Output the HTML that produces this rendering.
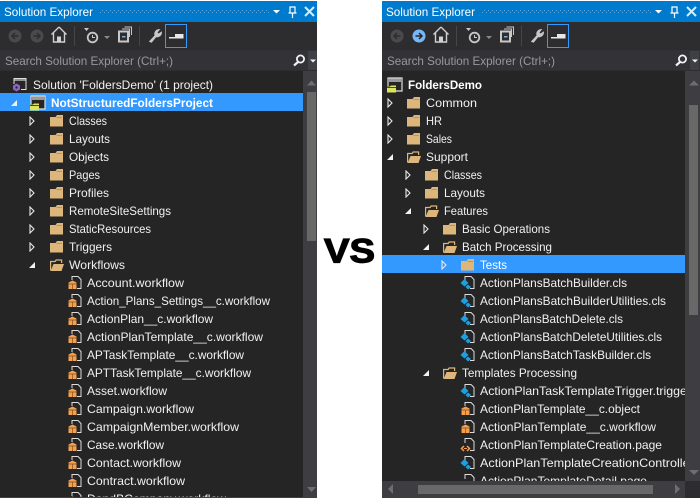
<!DOCTYPE html>
<html><head><meta charset="utf-8"><style>
html,body{margin:0;padding:0;background:#fff;width:700px;height:500px;overflow:hidden}
svg{display:block;font-family:"Liberation Sans",sans-serif;font-size:12px}
.t{fill:#f1f1f1}
.b{font-weight:bold;fill:#fff}
</style></head><body>
<svg width="700" height="500" viewBox="0 0 700 500" xmlns="http://www.w3.org/2000/svg">
<defs>
<pattern id="dots" width="4" height="4" patternUnits="userSpaceOnUse"><rect x="0" y="0" width="1" height="1" fill="#5aa9de"/><rect x="2" y="2" width="1" height="1" fill="#5aa9de"/></pattern>
<clipPath id="cl"><rect x="0" y="71" width="303" height="426"/></clipPath>
<clipPath id="cr"><rect x="382" y="71" width="303" height="410"/></clipPath>
<symbol id="fc" viewBox="0 0 14 14" width="14" height="14" overflow="visible"><path d="M0 3h5.500l1.500-2h6v11.500H0z" fill="#dcb67a"/><path d="M6.500 3.500h5.500" stroke="#b8975f" stroke-width="1"/></symbol>
<symbol id="fo" viewBox="0 0 14 14" width="14" height="14" overflow="visible"><path d="M0.600 12.500V3.500h4.500l1-1.500h5.500v3" fill="none" stroke="#dcb67a" stroke-width="1.200"/><path d="M3.500 6h10.500l-2.500 7H0.600z" fill="#dcb67a"/></symbol>
<symbol id="ah" viewBox="0 0 6 10" width="6" height="10"><path d="M1 1l4 4-4 4z" fill="none" stroke="#e8e8e8" stroke-width="1.100"/></symbol>
<symbol id="ae" viewBox="0 0 6 6" width="6" height="6"><path d="M0 6L6 0v6z" fill="#f1f1f1"/></symbol>
<symbol id="wf" viewBox="0 0 14 14" width="14" height="14" overflow="visible"><path d="M4 4V0.500h6l3 3v9H9" fill="none" stroke="#dcdcdc" stroke-width="1"/><path d="M0.500 6.500L4.500 4.500l4 2V13h-8z" fill="#f6a04d"/><path d="M0.500 8h8M4.500 8v5" stroke="#7a5228" stroke-width=".7"/></symbol>
<symbol id="cls" viewBox="0 0 14 14" width="14" height="14" overflow="visible"><path d="M4 4V0.500h6l3 3v9H9" fill="none" stroke="#dcdcdc" stroke-width="1"/><path d="M3.500 3L7.500 7 3.500 10.500 -0.500 7z" fill="#1ba1e2"/><path d="M7 8.500l3 2.500-3 2.500-2.500-2.500z" fill="#1ba1e2"/></symbol>
<symbol id="pg" viewBox="0 0 14 14" width="14" height="14" overflow="visible"><path d="M4 5V0.500h6l3 3v9H9" fill="none" stroke="#dcdcdc" stroke-width="1"/><path d="M3 8L0.500 10.500 3 13M6 8l2.500 2.500L6 13" fill="none" stroke="#f6a04d" stroke-width="1.500"/><path d="M3 10.500h3" stroke="#f6a04d"/></symbol>
<symbol id="proj" viewBox="0 0 16 16" width="16" height="16" overflow="visible"><path d="M1 9V1h14v13H9" fill="#252526" stroke="#e0e0e0" stroke-width="1.200"/><path d="M2 1.500h12v3.500H2z" fill="#9a9a9a"/><path d="M0 9.500h3l1-1h5v7H0z" fill="#dce35d"/><path d="M0 10.500h9" stroke="#252526" stroke-width=".8"/></symbol>
<symbol id="toolbar" viewBox="0 0 318 72" width="318" height="72" overflow="visible">
  <rect x="0" y="1" width="318" height="21" fill="#007acc"/>
  <rect x="0" y="22" width="318" height="28" fill="#2d2d30"/>
  <rect x="0" y="50" width="318" height="21" fill="#333337"/>
  <rect x="0" y="70" width="318" height="1" fill="#2d2d30"/>
  <rect x="100" y="9" width="169" height="5" fill="url(#dots)"/>
  <text x="4" y="16" fill="#fff" textLength="89" lengthAdjust="spacingAndGlyphs">Solution Explorer</text>
  <path d="M273 10h7l-3.500 3.500z" fill="#fff"/>
  <path d="M290 7h5v6h-5zM288.500 13h8M292.500 13v5" fill="none" stroke="#fff" stroke-width="1.200"/>
  <path d="M305 7l9 9M314 7l-9 9" stroke="#d8ecf8" stroke-width="2"/>
  <path d="M59 27l-7.500 7.500M59 27l7.500 7.500M53.500 33v9h11v-9" fill="none" stroke="#d0d0d0" stroke-width="1.400"/>
  <rect x="57" y="36.500" width="4" height="6" fill="#d0d0d0"/>
  <rect x="74" y="26" width="1" height="20" fill="#46464a"/>
  <path d="M84 28h5l-2.500 3z" fill="#c8c8c8"/>
  <circle cx="92.500" cy="37.500" r="4.800" fill="none" stroke="#c8c8c8" stroke-width="1.800"/>
  <path d="M92.500 35v2.500h2.500" stroke="#c8c8c8" fill="none"/>
  <path d="M104 36h6l-3 3z" fill="#8a8a8a"/>
  <path d="M122 29h7.500v8M124.500 27h7v8" fill="none" stroke="#c8c8c8"/>
  <rect x="119" y="31.500" width="9" height="10" fill="none" stroke="#c8c8c8" stroke-width="2"/>
  <rect x="122" y="36" width="3.500" height="1.500" fill="#7db0d8"/>
  <rect x="139" y="26" width="1" height="20" fill="#46464a"/>
  <path d="M149.500 41.500l5.500-6c-1-2.500.5-6 4.500-6l-2.500 3 1.500 1.500 3-2c.3 3.500-3 5.500-5.500 4.800l-4.500 5.500z" fill="#c8c8c8" stroke="#c8c8c8" stroke-width=".8"/>
  <rect x="165.500" y="24.500" width="21" height="23" fill="none" stroke="#3399ff"/>
  <rect x="169" y="37" width="14.500" height="1.500" fill="#e8e8e8"/>
  <rect x="175" y="34" width="8.500" height="4.500" fill="#e8e8e8"/>
  <text x="5" y="65" fill="#999" textLength="168" lengthAdjust="spacingAndGlyphs">Search Solution Explorer (Ctrl+;)</text>
  <rect x="308" y="51" width="9" height="19" fill="#3f3f46"/>
  <circle cx="300.500" cy="59" r="3.600" fill="none" stroke="#f1f1f1" stroke-width="1.800"/>
  <path d="M298 62l-4 3.500" stroke="#f1f1f1" stroke-width="2.200"/>
  <path d="M310 59.500h6l-3 3z" fill="#f1f1f1"/>
</symbol>
</defs>

<rect width="700" height="500" fill="#fff"/>

<!-- LEFT PANEL -->
<rect x="0" y="1" width="317" height="497" fill="#252526"/>
<use href="#toolbar"/>
<rect x="317" y="0" width="1" height="72" fill="#fff"/>
<circle cx="15" cy="36" r="6.500" fill="#4a4a4c"/><path d="M18.500 36h-6M15 33l-3 3 3 3" fill="none" stroke="#2d2d30" stroke-width="1.500"/>
<circle cx="37" cy="36" r="6.500" fill="#4a4a4c"/><path d="M33.500 36h6M37 33l3 3-3 3" fill="none" stroke="#2d2d30" stroke-width="1.500"/>
<rect x="0" y="93" width="303" height="18" fill="#3399ff"/>
<rect x="303" y="71" width="14" height="427" fill="#3e3e42"/>
<rect x="307" y="92" width="9" height="149" fill="#686868"/>
<path d="M307 85.500l4.500-5 4.500 5z" fill="#6e6e72"/>
<path d="M307 487h9l-4.500 5z" fill="#6e6e72"/>
<rect x="0" y="497" width="317" height="1" fill="#3f3f46"/>
<g clip-path="url(#cl)">
<rect x="14" y="78" width="12" height="3" fill="#909090"/>
<path d="M14 84V78.500h12v11h-5" fill="none" stroke="#e0e0e0"/>
<path d="M16.500 83.500l3.500 2v4l-3.500 2-3.500-2v-4z" fill="#9060c8"/>
<circle cx="16.500" cy="87.500" r="1.100" fill="#252526"/>
<text class="t" x="33" y="89" textLength="180" lengthAdjust="spacingAndGlyphs">Solution 'FoldersDemo' (1 project)</text>
<use href="#ae" x="11" y="100"/>
<use href="#proj" x="30" y="95"/>
<text class="b" x="51" y="107" textLength="162" lengthAdjust="spacingAndGlyphs">NotStructuredFoldersProject</text>

<use href="#ah" x="29" y="116"/><use href="#fc" x="50" y="114"/><text class="t" x="69" y="125" textLength="38" lengthAdjust="spacingAndGlyphs">Classes</text>
<use href="#ah" x="29" y="134"/><use href="#fc" x="50" y="132"/><text class="t" x="69" y="143" textLength="41" lengthAdjust="spacingAndGlyphs">Layouts</text>
<use href="#ah" x="29" y="152"/><use href="#fc" x="50" y="150"/><text class="t" x="69" y="161" textLength="40" lengthAdjust="spacingAndGlyphs">Objects</text>
<use href="#ah" x="29" y="170"/><use href="#fc" x="50" y="168"/><text class="t" x="69" y="179" textLength="31" lengthAdjust="spacingAndGlyphs">Pages</text>
<use href="#ah" x="29" y="188"/><use href="#fc" x="50" y="186"/><text class="t" x="69" y="197" textLength="40" lengthAdjust="spacingAndGlyphs">Profiles</text>
<use href="#ah" x="29" y="206"/><use href="#fc" x="50" y="204"/><text class="t" x="69" y="215" textLength="102" lengthAdjust="spacingAndGlyphs">RemoteSiteSettings</text>
<use href="#ah" x="29" y="224"/><use href="#fc" x="50" y="222"/><text class="t" x="69" y="233" textLength="82" lengthAdjust="spacingAndGlyphs">StaticResources</text>
<use href="#ah" x="29" y="242"/><use href="#fc" x="50" y="240"/><text class="t" x="69" y="251" textLength="43" lengthAdjust="spacingAndGlyphs">Triggers</text>
<use href="#ae" x="29" y="262"/><use href="#fo" x="50" y="258"/><text class="t" x="69" y="269" textLength="56" lengthAdjust="spacingAndGlyphs">Workflows</text>

<use href="#wf" x="68" y="276"/><text class="t" x="87" y="287" textLength="97" lengthAdjust="spacingAndGlyphs">Account.workflow</text>
<use href="#wf" x="68" y="294"/><text class="t" x="87" y="305" textLength="183" lengthAdjust="spacingAndGlyphs">Action_Plans_Settings__c.workflow</text>
<use href="#wf" x="68" y="312"/><text class="t" x="87" y="323" textLength="126" lengthAdjust="spacingAndGlyphs">ActionPlan__c.workflow</text>
<use href="#wf" x="68" y="330"/><text class="t" x="87" y="341" textLength="176" lengthAdjust="spacingAndGlyphs">ActionPlanTemplate__c.workflow</text>
<use href="#wf" x="68" y="348"/><text class="t" x="87" y="359" textLength="157" lengthAdjust="spacingAndGlyphs">APTaskTemplate__c.workflow</text>
<use href="#wf" x="68" y="366"/><text class="t" x="87" y="377" textLength="164" lengthAdjust="spacingAndGlyphs">APTTaskTemplate__c.workflow</text>
<use href="#wf" x="68" y="384"/><text class="t" x="87" y="395" textLength="80" lengthAdjust="spacingAndGlyphs">Asset.workflow</text>
<use href="#wf" x="68" y="402"/><text class="t" x="87" y="413" textLength="107" lengthAdjust="spacingAndGlyphs">Campaign.workflow</text>
<use href="#wf" x="68" y="420"/><text class="t" x="87" y="431" textLength="152" lengthAdjust="spacingAndGlyphs">CampaignMember.workflow</text>
<use href="#wf" x="68" y="438"/><text class="t" x="87" y="449" textLength="77" lengthAdjust="spacingAndGlyphs">Case.workflow</text>
<use href="#wf" x="68" y="456"/><text class="t" x="87" y="467" textLength="94" lengthAdjust="spacingAndGlyphs">Contact.workflow</text>
<use href="#wf" x="68" y="474"/><text class="t" x="87" y="485" textLength="98" lengthAdjust="spacingAndGlyphs">Contract.workflow</text>
<use href="#wf" x="68" y="492"/><text class="t" x="87" y="503" textLength="139" lengthAdjust="spacingAndGlyphs">DandBCompany.workflow</text>
</g>

<!-- VS -->
<text x="324" y="262.500" font-size="34" font-weight="bold" fill="#000" stroke="#000" stroke-width="1.200" textLength="51" lengthAdjust="spacingAndGlyphs">VS</text>

<!-- RIGHT PANEL -->
<rect x="382" y="1" width="318" height="497" fill="#252526"/>
<use href="#toolbar" x="382"/>
<circle cx="397" cy="36" r="6.500" fill="#4a4a4c"/><path d="M400.500 36h-6M397 33l-3 3 3 3" fill="none" stroke="#2d2d30" stroke-width="1.500"/>
<circle cx="419" cy="36" r="6.500" fill="#75b8f5"/><path d="M415.500 36h6M419 33l3 3-3 3" fill="none" stroke="#252526" stroke-width="1.500"/>
<rect x="382" y="255" width="303" height="18" fill="#3399ff"/>
<rect x="685" y="71" width="15" height="410" fill="#3e3e42"/>
<rect x="689" y="105" width="9" height="210" fill="#686868"/>
<path d="M689 85.500l5-5 5 5z" fill="#6e6e72"/>
<path d="M689 470h10l-5 5z" fill="#6e6e72"/>
<rect x="382" y="481" width="303" height="17" fill="#3e3e42"/>
<rect x="685" y="481" width="15" height="17" fill="#2d2d30"/>
<rect x="418" y="485" width="235" height="9" fill="#686868"/>
<path d="M393 484v10l-5-5z" fill="#6e6e72"/>
<path d="M675 484v10l5-5z" fill="#6e6e72"/>
<g clip-path="url(#cr)">
<use href="#proj" x="387" y="77"/>
<text class="b" x="408" y="89" textLength="74" lengthAdjust="spacingAndGlyphs">FoldersDemo</text>
<use href="#ah" x="387" y="98"/><use href="#fc" x="407" y="96"/><text class="t" x="426" y="107" textLength="51" lengthAdjust="spacingAndGlyphs">Common</text>
<use href="#ah" x="387" y="116"/><use href="#fc" x="407" y="114"/><text class="t" x="426" y="125" textLength="16" lengthAdjust="spacingAndGlyphs">HR</text>
<use href="#ah" x="387" y="134"/><use href="#fc" x="407" y="132"/><text class="t" x="426" y="143" textLength="26" lengthAdjust="spacingAndGlyphs">Sales</text>
<use href="#ae" x="387" y="154"/><use href="#fo" x="407" y="150"/><text class="t" x="426" y="161" textLength="42" lengthAdjust="spacingAndGlyphs">Support</text>
<use href="#ah" x="405" y="170"/><use href="#fc" x="425" y="168"/><text class="t" x="444" y="179" textLength="38" lengthAdjust="spacingAndGlyphs">Classes</text>
<use href="#ah" x="405" y="188"/><use href="#fc" x="425" y="186"/><text class="t" x="444" y="197" textLength="41" lengthAdjust="spacingAndGlyphs">Layouts</text>
<use href="#ae" x="405" y="208"/><use href="#fo" x="425" y="204"/><text class="t" x="444" y="215" textLength="44" lengthAdjust="spacingAndGlyphs">Features</text>
<use href="#ah" x="423" y="224"/><use href="#fc" x="443" y="222"/><text class="t" x="462" y="233" textLength="88" lengthAdjust="spacingAndGlyphs">Basic Operations</text>
<use href="#ae" x="423" y="244"/><use href="#fo" x="443" y="240"/><text class="t" x="462" y="251" textLength="90" lengthAdjust="spacingAndGlyphs">Batch Processing</text>
<use href="#ah" x="441" y="260"/><use href="#fc" x="461" y="258"/><text class="b" style="font-weight:normal" x="480" y="269" textLength="27" lengthAdjust="spacingAndGlyphs">Tests</text>
<use href="#cls" x="461" y="276"/><text class="t" x="480" y="287" textLength="147" lengthAdjust="spacingAndGlyphs">ActionPlansBatchBuilder.cls</text>
<use href="#cls" x="461" y="294"/><text class="t" x="480" y="305" textLength="186" lengthAdjust="spacingAndGlyphs">ActionPlansBatchBuilderUtilities.cls</text>
<use href="#cls" x="461" y="312"/><text class="t" x="480" y="323" textLength="143" lengthAdjust="spacingAndGlyphs">ActionPlansBatchDelete.cls</text>
<use href="#cls" x="461" y="330"/><text class="t" x="480" y="341" textLength="182" lengthAdjust="spacingAndGlyphs">ActionPlansBatchDeleteUtilities.cls</text>
<use href="#cls" x="461" y="348"/><text class="t" x="480" y="359" textLength="171" lengthAdjust="spacingAndGlyphs">ActionPlansBatchTaskBuilder.cls</text>
<use href="#ae" x="423" y="370"/><use href="#fo" x="443" y="366"/><text class="t" x="462" y="377" textLength="115" lengthAdjust="spacingAndGlyphs">Templates Processing</text>
<use href="#cls" x="461" y="384"/><text class="t" x="480" y="395" textLength="211" lengthAdjust="spacingAndGlyphs">ActionPlanTaskTemplateTrigger.trigger</text>
<use href="#wf" x="461" y="402"/><text class="t" x="480" y="413" textLength="160" lengthAdjust="spacingAndGlyphs">ActionPlanTemplate__c.object</text>
<use href="#wf" x="461" y="420"/><text class="t" x="480" y="431" textLength="176" lengthAdjust="spacingAndGlyphs">ActionPlanTemplate__c.workflow</text>
<use href="#pg" x="461" y="438"/><text class="t" x="480" y="449" textLength="182" lengthAdjust="spacingAndGlyphs">ActionPlanTemplateCreation.page</text>
<use href="#cls" x="461" y="456"/><text class="t" x="480" y="467" textLength="232" lengthAdjust="spacingAndGlyphs">ActionPlanTemplateCreationController.cls</text>
<use href="#pg" x="461" y="474"/><text class="t" x="480" y="485" textLength="167" lengthAdjust="spacingAndGlyphs">ActionPlanTemplateDetail.page</text>
</g>
</svg>
</body></html>
